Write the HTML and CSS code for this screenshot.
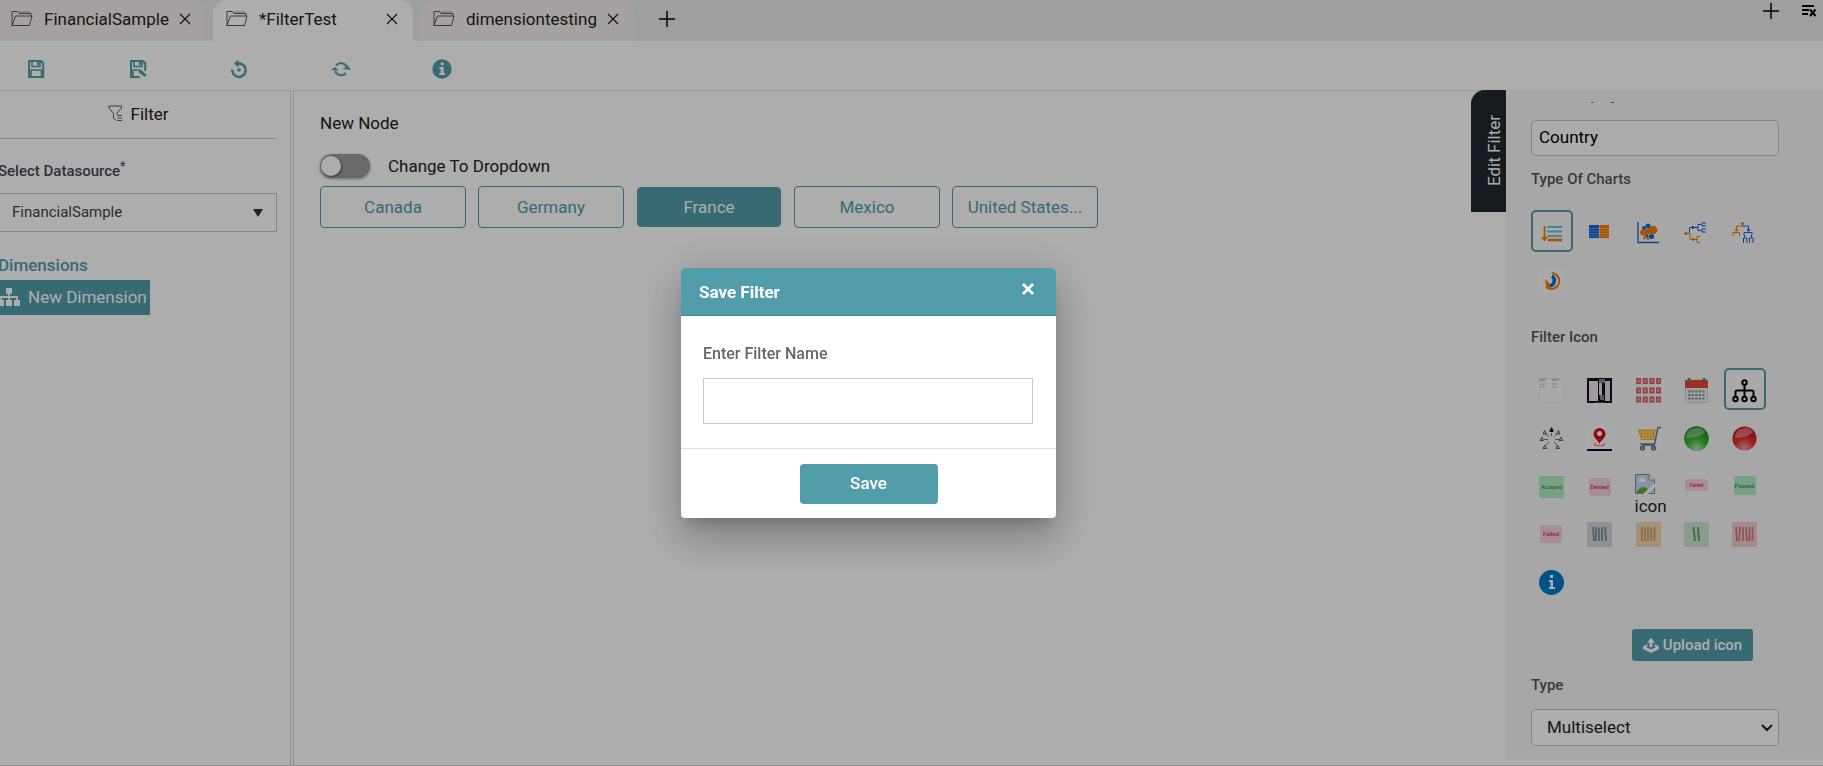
FILE: index.html
```html
<!DOCTYPE html>
<html lang="en">
<head>
  <meta charset="UTF-8" />
  <meta name="viewport" content="width=device-width, initial-scale=1.0" />
  <title>Filter</title>
  <link rel="stylesheet" href="styles.css">
</head>
<body>
  <!-- Shared shapes -->
  <svg class="sprite" width="0" height="0" aria-hidden="true">
    <symbol id="folder" viewBox="0 0 22 17">
      <path d="M1 15.500V1.500H6.500L8 3.500H20V6M1 15.500L4.500 6H21L18.500 15.500Z" fill="none" stroke="#555" stroke-width="1"/>
      <path d="M8 2H19" stroke="#999" stroke-width="1"/>
    </symbol>
    <symbol id="cross" viewBox="0 0 12 12">
      <path d="M1 1L11 11M11 1L1 11" stroke="#222" stroke-width="1.300"/>
    </symbol>
    <symbol id="plus" viewBox="0 0 16 16">
      <path d="M8 0V16M0 8H16" stroke="#000" stroke-width="1.500"/>
    </symbol>
  </svg>

  <div class="app">
    <!-- Tabs -->
    <header class="tabs">
      <div class="tab">
        <svg class="tab-folder"><use href="#folder"/></svg>
        <span class="tab-name">FinancialSample</span>
        <button class="tab-close" aria-label="Close FinancialSample"><svg width="12" height="12"><use href="#cross"/></svg></button>
      </div>
      <div class="tab active">
        <svg class="tab-folder"><use href="#folder"/></svg>
        <span class="tab-name">*FilterTest</span>
        <button class="tab-close" aria-label="Close FilterTest"><svg width="12" height="12"><use href="#cross"/></svg></button>
      </div>
      <div class="tab">
        <svg class="tab-folder"><use href="#folder"/></svg>
        <span class="tab-name">dimensiontesting</span>
        <button class="tab-close" aria-label="Close dimensiontesting"><svg width="12" height="12"><use href="#cross"/></svg></button>
      </div>
      <button class="tab-add" aria-label="New tab"><svg width="16" height="16"><use href="#plus"/></svg></button>
      <div class="tab-tools">
        <button aria-label="Add"><svg width="16" height="16"><use href="#plus"/></svg></button>
        <button aria-label="Close all">
          <svg width="16" height="14" viewBox="0 0 16 14"><path d="M1 3H13M1 7H8M1 11H7M9 6.500L14.500 13M14.500 6.500L9 13" fill="none" stroke="#000" stroke-width="2"/></svg>
        </button>
      </div>
    </header>

    <!-- Toolbar -->
    <nav class="toolbar">
      <button aria-label="Save">
        <svg width="20" height="20" viewBox="0 0 20 20"><path d="M3 2H15L17.200 4.500V18H3Z" fill="none" stroke="#519da9" stroke-width="2"/><path d="M6 2V7.500H14V2M5 18V11H15.500V18" fill="none" stroke="#519da9" stroke-width="1.600"/><path d="M11 2H13V6H11Z" fill="#519da9"/></svg>
      </button>
      <button aria-label="Save as">
        <svg width="20" height="20" viewBox="0 0 20 20"><path d="M12 18H3V2H15L17.200 4.500V12" fill="none" stroke="#519da9" stroke-width="2"/><path d="M6 2V7.500H14V2M5 18V11H10" fill="none" stroke="#519da9" stroke-width="1.600"/><path d="M11 2H13V6H11Z" fill="#519da9"/><path d="M10 10L13.500 11L18.500 16L16.500 18L11 13.500Z" fill="#519da9"/></svg>
      </button>
      <button aria-label="Reset">
        <svg width="20" height="20" viewBox="0 0 20 20"><path d="M8 4.500H10A6.700 6.700 0 1 1 3.300 10.500" fill="none" stroke="#519da9" stroke-width="2.500"/><path d="M9.500 .5V8.500L5 4.500Z" fill="#519da9"/><circle cx="10" cy="11" r="1.800" fill="#519da9"/></svg>
      </button>
      <button aria-label="Refresh">
        <svg width="20" height="20" viewBox="0 0 20 20"><path d="M5 6.500A6.500 6.500 0 0 1 16 8M15 14A6.500 6.500 0 0 1 4 12" fill="none" stroke="#519da9" stroke-width="2"/><path d="M12 10L16.500 6L20 11ZM0 11L4 8L8 11.500Z" fill="#519da9"/></svg>
      </button>
      <button aria-label="Information">
        <svg width="20" height="20" viewBox="0 0 20 20"><circle cx="10" cy="10" r="9.700" fill="#519da9"/><path d="M8.700 3.500H11.600V6.300H8.700ZM7.300 8H11.700V14H13V16H7.300V14H8.600V10H7.300Z" fill="#fff"/></svg>
      </button>
    </nav>

    <div class="workspace">
      <!-- Left panel -->
      <aside class="side">
        <div class="side-title">
          <svg width="15" height="17" viewBox="0 0 15 17"><path d="M1 1H13.500V3L9 8V10M1 1V3L5.500 8.500V13L8 15.500" fill="none" stroke="#555" stroke-width="1"/><path d="M9.500 10.500H14M9.500 13H14M9.500 15.500H14" stroke="#555" stroke-width="1"/></svg>
          <span>Filter</span>
        </div>
        <div class="side-body">
          <label class="side-label" for="datasource">Select Datasource<sup>*</sup></label>
          <div class="select-box datasource">
            <select id="datasource"><option>FinancialSample</option></select>
            <svg class="arrow" width="10" height="8" viewBox="0 0 10 8"><path d="M0 0H10L5 8Z" fill="#333"/></svg>
          </div>
          <h2 class="side-heading">Dimensions</h2>
          <button class="dimension">
            <svg width="22" height="20" viewBox="0 0 22 20"><path d="M8 1H14V7H8ZM0 13H6V19H0ZM8 13H14V19H8ZM16 13H22V19H16Z" fill="#fff"/><path d="M3 13V10H19V13M11 7V13" fill="none" stroke="#fff" stroke-width="1.800"/></svg>
            <span>New Dimension</span>
          </button>
        </div>
      </aside>

      <!-- Preview -->
      <main class="preview">
        <p class="node-name">New Node</p>
        <label class="toggle">
          <input type="checkbox">
          <span>Change To Dropdown</span>
        </label>
        <div class="values">
          <button>Canada</button>
          <button>Germany</button>
          <button class="selected">France</button>
          <button>Mexico</button>
          <button>United States...</button>
        </div>
        <button class="edit-tab"><span>Edit Filter</span></button>
      </main>

      <!-- Filter settings -->
      <aside class="settings">
        <!-- scrolled almost out of view -->
        <label class="scrolled" for="displayName">Filter Display Name</label>
        <input type="text" id="displayName" value="Country">

        <h3>Type Of Charts</h3>
        <div class="icon-grid charts">
          <button class="chosen" aria-label="List">
            <svg viewBox="0 0 25 25"><path d="M0 0H25V25H0Z" fill="#fafafa"/><path d="M8 6H23M8 10.500H23M8 15H23" stroke="#62c6d2" stroke-width="2"/><path d="M9 19H23" stroke="#f57c00" stroke-width="2.600"/><path d="M5.500 5V17" stroke="#f57c00" stroke-width="1.800"/><path d="M2 16H9L5.500 20.500Z" fill="#f57c00"/></svg>
          </button>
          <button aria-label="Table">
            <svg viewBox="0 0 25 25"><path d="M2 4H12V17H2Z" fill="#1565d8"/><path d="M12.500 4H22V17H12.500Z" fill="#f57c00"/><path d="M2 7.500H22M2 10H22M2 12.500H22M2 15H22" stroke="#fff" stroke-width=".3"/></svg>
          </button>
          <button aria-label="Bubble">
            <svg viewBox="0 0 25 25"><path d="M2 1V21.500H23" fill="none" stroke="#1565d8" stroke-width="1.300"/><g fill="#1565d8"><circle cx="12" cy="5" r="2.500"/><circle cx="8" cy="7" r="2"/><circle cx="15.500" cy="15.500" r="2.600"/><circle cx="11" cy="15" r="1.700"/></g><g fill="#f57c00"><circle cx="17" cy="9" r="4.300"/><circle cx="7.500" cy="11.500" r="3.300"/><circle cx="12" cy="10.500" r="3"/><circle cx="8.500" cy="17" r="1.500"/><circle cx="12" cy="18" r="1.200"/></g></svg>
          </button>
          <button aria-label="Horizontal tree">
            <svg viewBox="0 0 25 25" fill="none" stroke-width="1"><path d="M3 12.500H5.500V6.500H10M10 6.500H14V3.500H17M14 6.500V9.500H17M22 2H18V5H22M22 8H18V11H22" stroke="#1565d8"/><path d="M1 12.500H6V18.500H13M16 15.500H13V21.500H16" stroke="#f57c00"/><circle cx="2" cy="12.500" r="1.600" fill="#f57c00"/><circle cx="9" cy="18.500" r="1.400" fill="#f57c00"/><circle cx="9" cy="6.500" r="1.400" fill="#1565d8"/></svg>
          </button>
          <button aria-label="Vertical tree">
            <svg viewBox="0 0 25 25" fill="none" stroke-width="1"><path d="M10.500 2V5H4.500V10M1 15V11.500H7.500V15" stroke="#f57c00"/><path d="M10.500 5H16.500V10M12 14V11.500H20V14M11.500 22V17H15V22M17.500 22V17H21V22M12.500 14V17M19.500 14V17" stroke="#1565d8"/><circle cx="10.500" cy="2.500" r="1.600" fill="#f57c00"/><circle cx="4.500" cy="9" r="1.500" fill="#f57c00"/><circle cx="16.500" cy="9" r="1.500" fill="#1565d8"/></svg>
          </button>
          <button aria-label="Radial">
            <svg viewBox="0 0 25 25"><path d="M0 0H25V25H0Z" fill="#fafafa"/><path d="M13 4A8 8 0 1 1 7 18" fill="none" stroke="#f57c00" stroke-width="2"/><path d="M13 7A5.500 5.500 0 0 1 10 17" fill="none" stroke="#1565d8" stroke-width="3.500"/><path d="M6 10L11 15V20L7 17Z" fill="#f57c00"/></svg>
          </button>
        </div>

        <h3 class="icon-title">Filter Icon</h3>
        <div class="icon-grid">
          <button aria-label="Page">
            <svg viewBox="0 0 25 25"><path d="M.5 .5H24.500V24.500H.5Z" fill="#fafafa" stroke="#eee"/><path d="M0 1H8M12 1H21M0 2.500H6M13 2.500H19" stroke="#999" stroke-width=".6"/><path d="M1 6H6M13 6H18M1 9H6M13 9H18" stroke="#baa" stroke-width=".8"/></svg>
          </button>
          <button aria-label="Screens">
            <svg viewBox="0 0 25 25"><path d="M0 0H25V25H0Z" fill="#112"/><path d="M2 3H11V23H2Z" fill="#eee4ea"/><path d="M12 5H15V17H12ZM18 3H23V23H18Z" fill="#ddd"/><path d="M12 1H18V5H12ZM13 17H17V22H13Z" fill="#888"/><path d="M8 24.500H18" stroke="#248"/></svg>
          </button>
          <button aria-label="Cards">
            <svg viewBox="0 0 25 25"><path d="M0 0H25V25H0Z" fill="#f4eeee"/><path d="M0 3H25M0 12.500H25M0 21.500H25" stroke="#d6605c" stroke-width="6" stroke-dasharray="5 1.700"/><path d="M1.500 3H25M1.500 12.500H25M1.500 21.500H25" stroke="#edaaa8" stroke-width="3" stroke-dasharray="2 4.700"/></svg>
          </button>
          <button aria-label="Calendar">
            <svg viewBox="0 0 25 25"><rect x="1.500" y="2" width="22" height="22.500" rx="1" fill="#eceff1" stroke="#c9cfd2"/><path d="M1 2H24V10H1Z" fill="#e04a35"/><path d="M4 13.500H21M4 17H21M4 20.500H21" stroke="#90979c" stroke-width="2.200" stroke-dasharray="2.500 1"/><path d="M5 0V4M20 0V4" stroke="#777" stroke-width="2.500"/></svg>
          </button>
          <button class="chosen" aria-label="Hierarchy">
            <svg viewBox="0 0 25 25"><path d="M0 0H25V25H0Z" fill="#fafafa"/><path d="M12.500 7V18M3.500 18V14Q3.500 12.500 5 12.500H20Q21.500 12.500 21.500 14V18" fill="none" stroke="#000" stroke-width="2"/><g fill="#fff" stroke="#000" stroke-width="2"><circle cx="12.500" cy="4.500" r="2.200"/><circle cx="3.500" cy="21" r="2.200"/><circle cx="12.500" cy="21" r="2.200"/><circle cx="21.500" cy="21" r="2.200"/></g></svg>
          </button>

          <button aria-label="People">
            <svg viewBox="0 0 25 25"><path d="M12.500 7V10M7 8L10 11M18 8L15 11M5 13.500H9M16 13.500H20M7 19L10 16M18 19L15 16" stroke="#555" stroke-width=".8"/><path d="M11 5.500V4H12V2H13V4H14V5.500Z" fill="#000" stroke="#000"/><g fill="#ddd" stroke="#444" stroke-width=".8"><path d="M4 8L5.500 4.500L7.500 8ZM17.500 8L19.500 4.500L21 8ZM1 14.500L3 11L4.500 14.500ZM20 14.500L22 11L23.500 14.500ZM4 22.500L6 19L7.500 22.500ZM17 22.500L18.500 19L20.500 22.500Z"/></g></svg>
          </button>
          <button aria-label="Location">
            <svg viewBox="0 0 25 25"><path d="M0 0H25V25H0Z" fill="#fafafa"/><path d="M12.500 18C11 14 6.500 12 6.500 8A6 6 0 0 1 18.500 8C18.500 12 14 14 12.500 18Z" fill="#d80e14"/><circle cx="12.500" cy="7.500" r="2.500" fill="#fff"/><path d="M9 17.500Q5 18.500 9 19.500Q12.500 20 16 19.500Q20 18.500 16 17.500" fill="none" stroke="#d66" stroke-width="1"/><path d="M0 24H25" stroke="#103" stroke-width="2"/></svg>
          </button>
          <button aria-label="Cart">
            <svg viewBox="0 0 25 25"><path d="M0 0H25V25H0Z" fill="#fafafa"/><path d="M2 3.500H20L18 14H5Z" fill="#f6a80c"/><path d="M4 6H19M4 9H19M5 12H18M7 4V13M10 4V13M13 4V13M16 4V13" stroke="#fff0cc" stroke-width=".7"/><path d="M25 1.500H22L18.500 18H4M6 19H19" fill="none" stroke="#607d8b" stroke-width="1.500"/><g fill="#b0bec5" stroke="#546e7a" stroke-width="1.400"><circle cx="6.500" cy="22" r="1.900"/><circle cx="17.500" cy="22" r="1.900"/></g></svg>
          </button>
          <button aria-label="Green">
            <svg viewBox="0 0 25 25"><defs><radialGradient id="green" cx=".5" cy=".9" r=".8"><stop offset="0" stop-color="#a5eaa2"/><stop offset=".5" stop-color="#3eb43a"/><stop offset="1" stop-color="#158b1a"/></radialGradient></defs><circle cx="12.500" cy="12.500" r="12.300" fill="url(#green)"/><path d="M2 12A10.500 10.500 0 0 1 21 6Q15 12 2 12Z" fill="#fff" opacity=".35"/></svg>
          </button>
          <button aria-label="Red">
            <svg viewBox="0 0 25 25"><defs><radialGradient id="red" cx=".5" cy=".9" r=".8"><stop offset="0" stop-color="#f4a0a0"/><stop offset=".5" stop-color="#e23434"/><stop offset="1" stop-color="#c91318"/></radialGradient></defs><circle cx="12.500" cy="12.500" r="12" fill="url(#red)"/><path d="M3 12A10 10 0 0 1 21 6Q15 12 3 12Z" fill="#fff" opacity=".35"/></svg>
          </button>

          <button aria-label="Accepted">
            <svg viewBox="0 0 25 25"><rect y="2" width="25" height="22" rx="2" fill="#b2ecc2"/><text class="pill green" x="12.500" y="15" font-size="5">Accepted</text></svg>
          </button>
          <button aria-label="Denied">
            <svg viewBox="0 0 25 25"><rect x="2" y="4" width="22" height="18" rx="3" fill="#f3d3dc"/><text class="pill pink" x="12.500" y="15" font-size="6">Denied</text></svg>
          </button>
          <button class="missing">
            <svg viewBox="0 0 20 20"><path d="M.5 .5H14L19.500 6V19.500H.5Z" fill="#c5dcfa" stroke="#888"/><path d="M14 .5V6H19.500" fill="#fff" stroke="#888"/><path d="M4 8A2 2 0 0 1 6 5A2 2 0 0 1 10 6L11 8Z" fill="#fff"/><path d="M1 19Q5 11 12 14L14 19Z" fill="#55b334"/><path d="M8 20L20 9V13L13 20Z" fill="#fff"/></svg>
            <span>icon</span>
          </button>
          <button aria-label="Failed">
            <svg viewBox="0 0 25 25"><rect x="1" y="5" width="23" height="12" rx="3" fill="#f3d3dc"/><text class="pill pink" x="12.500" y="13" font-size="5">Failed</text></svg>
          </button>
          <button aria-label="Passed">
            <svg viewBox="0 0 25 25"><rect x="2" y="2" width="22" height="19" rx="3" fill="#b2ecc2"/><text class="pill green" x="12.500" y="14" font-size="6">Passed</text></svg>
          </button>

          <button aria-label="Failed">
            <svg viewBox="0 0 25 25"><rect x="1" y="3" width="22" height="18" rx="3" fill="#f3d3dc"/><text class="pill pink" x="12" y="14" font-size="6">Failed</text></svg>
          </button>
          <button aria-label="Grey bars">
            <svg viewBox="0 0 25 25"><path d="M0 0H25V25H0Z" fill="#d3d7da"/><path d="M6 5L7 19M9 5V19M12 6V19M15 5V19M18 5L19 19" stroke="#78909c" stroke-width="1.800"/></svg>
          </button>
          <button aria-label="Orange bars">
            <svg viewBox="0 0 25 25"><path d="M0 0H25V25H0Z" fill="#f3d5b2"/><path d="M6 5V19M9 6V19M12 5V19M15 6V19M18.500 5V19" stroke="#d9a066" stroke-width="1.800"/></svg>
          </button>
          <button aria-label="Green bars">
            <svg viewBox="0 0 25 25"><path d="M0 0H25V25H0Z" fill="#cfe5d0"/><path d="M9.500 5L11 19M14 5L15 19" stroke="#5fa768" stroke-width="2"/></svg>
          </button>
          <button aria-label="Red bars">
            <svg viewBox="0 0 25 25"><path d="M0 0H25V25H0Z" fill="#f1cdcd"/><path d="M4 5L5 19M8 5L7 19M11 5V19M14 5L15 19M17.500 5V19M20.500 5V19" stroke="#d67373" stroke-width="1.600"/></svg>
          </button>

          <button aria-label="Info">
            <svg viewBox="0 0 25 25"><circle cx="12.500" cy="12.500" r="12.500" fill="#007dc5"/><path d="M11 5H14V8H11ZM10 10H14V17H16V19H10V17H11.500V12H10Z" fill="#fff"/></svg>
          </button>
        </div>

        <button class="upload">
          <svg width="16" height="15" viewBox="0 0 16 15"><path d="M8 0L12 4.500H9.500V9H6.500V4.500H4Z" fill="#fff"/><path d="M4.500 6L0 8.500V11L8 15L16 11V8.500L11.500 6V8L13 9L8 11.500L3 9L4.500 8Z" fill="#fff"/></svg>
          <span>Upload icon</span>
        </button>

        <label class="type-label" for="type">Type</label>
        <div class="select-box type">
          <select id="type"><option>Multiselect</option></select>
          <svg class="arrow" width="12" height="8" viewBox="0 0 12 8"><path d="M1 1L6 6L11 1" fill="none" stroke="#222" stroke-width="2"/></svg>
        </div>
      </aside>
    </div>
  </div>

  <!-- Save dialog -->
  <div class="overlay">
    <form class="dialog" role="dialog" aria-labelledby="dialogTitle">
      <div class="dialog-header">
        <h1 id="dialogTitle">Save Filter</h1>
        <button type="button" aria-label="Close"><svg width="12" height="12" viewBox="0 0 12 12"><path d="M1 1L11 11M11 1L1 11" stroke="#fff" stroke-width="2.600"/></svg></button>
      </div>
      <div class="dialog-body">
        <label for="filterName">Enter Filter Name</label>
        <input type="text" id="filterName">
      </div>
      <div class="dialog-footer">
        <button type="button">Save</button>
      </div>
    </form>
  </div>
</body>
</html>
```

FILE: styles.css
```css
/* Base Styles */
* {
  box-sizing: border-box;
}

body {
  margin: 0;
  background: #ffffff;
  color: #222222;
  font-family: Roboto, sans-serif;
  font-size: 17px;
  line-height: 24px;
  overflow: hidden;
}

button,
input,
select {
  font-family: inherit;
  font-size: inherit;
  line-height: inherit;
  color: inherit;
}

button {
  margin: 0;
  padding: 0;
  border: none;
  background: none;
  cursor: pointer;
}

svg {
  display: block;
  flex-shrink: 0;
}

h1, h2, h3, p {
  margin: 0;
}

.sprite {
  position: absolute;
}

.app {
  display: flex;
  flex-direction: column;
  height: 100vh;
}

/* Tabs */
.tabs {
  display: flex;
  gap: 7px;
  height: 41px;
  background: #eaeaea;
}

.tab {
  display: flex;
  align-items: center;
  padding: 0 15px 4px 13px;
  background: #f5eeed;
  border-radius: 14px 14px 0 0;
}

.tab:first-child {
  margin-left: -2px;
}

.tab.active {
  width: 200px;
  background: #ffffff;
}

.tab-folder {
  width: 22px;
  height: 17px;
  margin-right: 11px;
}

.tab-name {
  flex: 1;
}

.tab-close {
  margin-left: 10px;
}

.tab-add {
  padding: 0 18px 3px;
}

.tab-tools {
  display: flex;
  align-items: flex-start;
  gap: 22px;
  margin-left: auto;
  padding: 3px 6px 0 0;
}

/* Toolbar */
.toolbar {
  display: flex;
  align-items: center;
  justify-content: space-between;
  width: 426px;
  height: 49px;
  margin-left: 26px;
  padding-top: 6px;
}

/* Workspace */
.workspace {
  display: flex;
  flex: 1;
  gap: 2px;
  min-height: 0;
  border-bottom: 1px solid #d9d9d9;
}

/* Left panel */
.side {
  width: 291px;
  border-top: 1px solid #d9d9d9;
  border-right: 1px solid #d9d9d9;
}

.side-title {
  display: flex;
  align-items: center;
  justify-content: center;
  gap: 7px;
  width: 277px;
  height: 48px;
  padding-bottom: 2px;
  border-bottom: 1px solid #c4c4c4;
}

.side-body {
  margin-left: -2px;
  padding-top: 20px;
}

.side-label {
  display: block;
  margin-bottom: 10px;
  color: #444b58;
  font-size: 15px;
  font-weight: 500;
}

.side-label sup {
  font-size: 12px;
  line-height: 0;
}

.select-box {
  position: relative;
}

.select-box select {
  width: 100%;
  height: 100%;
  border: 1px solid #c4c4c4;
  background: #ffffff;
  appearance: none;
}

.datasource {
  width: 279px;
  height: 39px;
}

.datasource select {
  padding: 0 13px 2px;
  color: #444444;
  font-size: 15px;
}

.arrow {
  position: absolute;
  top: 50%;
  right: 14px;
  transform: translateY(-50%);
  pointer-events: none;
}

.side-heading {
  margin: 21px 0 3px;
  color: #519da9;
  font-size: 17px;
  font-weight: 500;
}

.dimension {
  display: flex;
  align-items: center;
  gap: 8px;
  width: 152px;
  height: 35px;
  padding-bottom: 2px;
  background: #519da9;
  color: #ffffff;
  white-space: nowrap;
}

/* Preview */
.preview {
  position: relative;
  flex: 1;
  padding: 20px 26px;
  border-top: 1px solid #d9d9d9;
  border-left: 1px solid #d9d9d9;
}

.toggle {
  display: flex;
  align-items: center;
  gap: 18px;
  margin-top: 19px;
}

.toggle input {
  width: 50px;
  height: 24px;
  margin: 0;
  padding: 2px 1px;
  border-radius: 12px;
  background: #9c9c9c;
  box-shadow: 0 1px 3px rgba(0, 0, 0, 0.4);
  appearance: none;
}

.toggle input::before {
  content: "";
  display: block;
  width: 20px;
  height: 20px;
  border-radius: 50%;
  background: #ffffff;
  box-shadow: 1px 1px 2px rgba(0, 0, 0, 0.5);
}

.values {
  display: flex;
  align-items: center;
  gap: 12px;
  margin-top: 8px;
}

.values button {
  width: 146px;
  height: 42px;
  border: 1px solid #519da9;
  border-radius: 4px;
  color: #519da9;
}

.values .selected {
  width: 144px;
  height: 40px;
  margin: 0 1px;
  background: #519da9;
  color: #ffffff;
}

.edit-tab {
  position: absolute;
  top: -1px;
  right: -2px;
  display: flex;
  align-items: center;
  justify-content: center;
  width: 35px;
  height: 122px;
  padding-left: 11px;
  border-radius: 14px 0 0 0;
  background: #20292f;
  color: #ffffff;
}

.edit-tab span {
  writing-mode: vertical-rl;
  transform: rotate(180deg);
}

/* Filter settings */
.settings {
  width: 317px;
  margin-bottom: 6px;
  padding: 12px 44px 0 25px;
  background: #f7f7f7;
}

.settings h3,
.settings label {
  color: #555555;
  font-size: 15px;
  font-weight: 500;
}

.scrolled {
  display: flex;
  align-items: flex-end;
  height: 2px;
  margin-bottom: 16px;
  overflow: hidden;
  line-height: 18px;
}

.settings > input {
  width: 100%;
  height: 36px;
  padding: 0 7px 2px;
  border: 1px solid #c4c4c4;
  border-radius: 5px;
  background: #fcfcfc;
  color: #000000;
}

.settings h3 {
  margin: 11px 0 19px;
}

.icon-grid {
  display: grid;
  grid-template-columns: repeat(5, 42px);
  grid-auto-rows: 42px;
  justify-content: space-between;
  row-gap: 6px;
  width: 235px;
}

.icon-grid button {
  padding: 3px 6px 0;
  border: 2px solid transparent;
  border-radius: 5px;
}

.charts button {
  padding-top: 5px;
}

.icon-grid button svg {
  width: 25px;
  height: 25px;
}

.icon-grid .chosen {
  border-color: #519da9;
  background: #fafafa;
}

.settings .icon-title {
  margin: 25px 0 19px;
}

.icon-grid .missing {
  padding: 8px 5px 0;
  text-align: left;
}

.icon-grid .missing svg {
  width: 20px;
  height: 20px;
}

.pill {
  font-weight: 500;
  text-anchor: middle;
}

.green {
  fill: #3f8f5a;
}

.pink {
  fill: #e02468;
}

.upload {
  display: flex;
  align-items: center;
  justify-content: center;
  gap: 4px;
  width: 121px;
  height: 32px;
  margin: 27px 0 12px 101px;
  border-radius: 3px;
  background: #519da9;
  color: #ffffff;
  font-size: 15px;
  font-weight: 500;
}

.type-label {
  display: block;
}

.type {
  height: 37px;
  margin-top: 12px;
}

.type select {
  padding: 0 15px 2px;
  border-radius: 5px;
}

.type .arrow {
  right: 6px;
}

/* Save dialog */
.overlay {
  position: fixed;
  inset: 0;
  display: flex;
  align-items: center;
  justify-content: center;
  padding: 20px 86px 0 0;
  background: rgba(0, 0, 0, 0.32);
}

.dialog {
  width: 375px;
  border-radius: 4px;
  background: #ffffff;
  box-shadow: 0 11px 15px -7px rgba(0, 0, 0, 0.2), 0 24px 38px 3px rgba(0, 0, 0, 0.14), 0 9px 46px 8px rgba(0, 0, 0, 0.12);
}

.dialog-header {
  display: flex;
  justify-content: space-between;
  height: 48px;
  padding: 12px 22px 0 18px;
  border-bottom: 1px solid #468792;
  border-radius: 4px 4px 0 0;
  background: #519da9;
  color: #ffffff;
}

.dialog-header h1 {
  font-size: 17px;
  font-weight: 700;
}

.dialog-header button {
  height: 18px;
}

.dialog-body {
  padding: 26px 23px 24px 22px;
}

.dialog-body label {
  display: block;
  margin-bottom: 12px;
  color: #666666;
  font-size: 16px;
  font-weight: 500;
}

.dialog-body input {
  display: block;
  width: 100%;
  height: 46px;
  padding: 0 12px;
  border: 1px solid #c8c8c8;
}

.dialog-footer {
  padding: 15px 0 14px;
  border-top: 1px solid #dee2e6;
}

.dialog-footer button {
  display: block;
  width: 138px;
  height: 40px;
  margin: 0 auto;
  padding-bottom: 2px;
  border-radius: 4px;
  background: #519da9;
  color: #ffffff;
  font-weight: 500;
}
```
